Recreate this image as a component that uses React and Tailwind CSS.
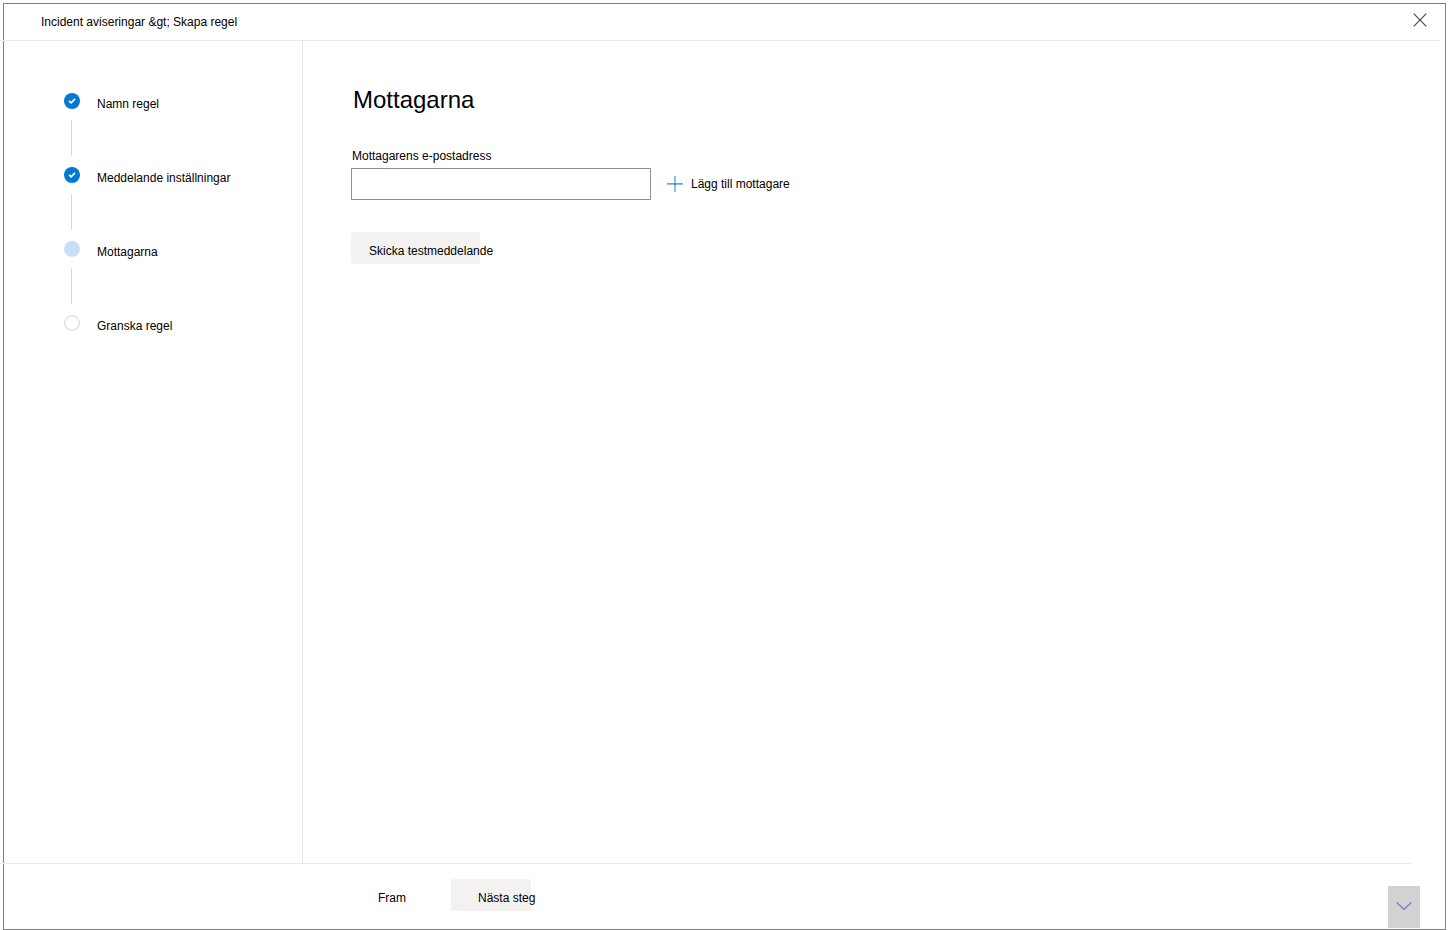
const steps = [
  { label: "Namn regel", state: "done" },
  { label: "Meddelande inställningar", state: "done" },
  { label: "Mottagarna", state: "current" },
  { label: "Granska regel", state: "upcoming" },
];

function StepMarker({ state }) {
  return (
    <svg className="block size-4" viewBox="0 0 16 16" fill="none" aria-hidden="true">
      {state === "done" && (
        <>
          <circle cx="8" cy="8" r="8" fill="#0078d4" />
          <path d="M5 7.8 7.1 9.8 11 5.9" stroke="#fff" strokeWidth="1.7" />
        </>
      )}
      {state === "current" && <circle cx="8" cy="8" r="8" fill="#c7e0f4" />}
      {state === "upcoming" && <circle cx="8" cy="8" r="7.3" stroke="#e1e1e1" strokeWidth="1.5" />}
    </svg>
  );
}

function Step({ label, state, last }) {
  return (
    <li className="flex gap-[17px]" aria-current={state === "current" ? "step" : undefined}>
      <div className="flex w-4 flex-col items-center">
        <StepMarker state={state} />
        {!last && <div className="mt-[11px] mb-[11px] mr-px h-9 w-px bg-[#d8d8d8]" />}
      </div>
      <span className="pt-[3px] leading-4">{label}</span>
    </li>
  );
}

export default function App() {
  return (
    <div className="flex min-h-screen bg-white pt-[3px] pr-[6px] pl-[3px] font-['Liberation_Sans',Arial,sans-serif] text-xs text-black">
      <div className="flex flex-1 flex-col border border-[#7f7f7f]">
        <header className="mr-[5px] -ml-1 flex h-[37px] items-center justify-between border-b border-[#eaeaea] pr-[13px] pl-[41px]">
          <span>Incident aviseringar &amp;gt; Skapa regel</span>
          <button type="button" aria-label="Stäng" className="mb-1">
            <svg className="block size-[14px]" viewBox="0 0 14 14" stroke="#444" strokeWidth="1.1" aria-hidden="true">
              <path d="M.7.7 13.3 13.3M13.3.7.7 13.3" />
            </svg>
          </button>
        </header>

        <div className="flex flex-1">
          <nav className="w-[299px] shrink-0 border-r border-[#eaeaea] pt-[52px] pl-[60px]" aria-label="Steg">
            <ol className="flex flex-col">
              {steps.map((step, i) => (
                <Step key={step.label} {...step} last={i === steps.length - 1} />
              ))}
            </ol>
          </nav>

          <main className="flex-1 pt-[43px] pl-12">
            <h1 className="pl-[2px] text-2xl leading-8">Mottagarna</h1>
            <form>
              <label htmlFor="recipient" className="mt-8 block pl-px leading-4">
                Mottagarens e-postadress
              </label>
              <div className="mt-1 flex items-center gap-4">
                <input id="recipient" type="email" className="h-8 w-[300px] border border-[#8f8f8f] bg-white px-2 outline-none" />
                <button type="button" className="flex items-center gap-2">
                  <svg className="size-4" viewBox="0 0 16 16" aria-hidden="true">
                    <path d="M7 0h2v16H7z" fill="#8dbfe3" />
                    <path d="M0 7h16v2H0z" fill="#8dbfe3" />
                    <path d="M0 7h16v1H0z" fill="#65a9da" />
                    <path d="M7 7h2v2H7z" fill="#348fd1" />
                  </svg>
                  Lägg till mottagare
                </button>
              </div>
              <button type="button" className="mt-8 block h-8 w-[129px] rounded-xs bg-[#f3f2f1] pt-1.5 pl-[18px] text-left whitespace-nowrap">
                Skicka testmeddelande
              </button>
            </form>
          </main>
        </div>

        <footer className="-ml-1 flex h-[66px] items-start justify-between">
          <div className="mr-[34px] flex flex-1 items-start gap-[45px] border-t border-[#eaeaea] pt-[15px] pl-[378px]">
            <button type="button" className="h-8 pt-1.5">Fram</button>
            <button type="button" className="h-8 w-20 rounded-xs bg-[#f3f2f1] pt-1.5 pl-[27px] text-left whitespace-nowrap">
              Nästa steg
            </button>
          </div>
          <button
            type="button"
            aria-label="Rulla nedåt"
            className="mt-[23px] mr-[25px] -ml-[57px] flex h-[42px] w-8 items-center justify-center bg-[#d2d2d2]"
          >
            <svg className="mb-[2px] h-2 w-4" viewBox="0 0 16 8" fill="none" aria-hidden="true">
              <path d="M.5.3 8 7.5 15.5.3" stroke="#b18bc4" strokeWidth="1.5" />
              <path d="M.5.3 8 7.3 15.5.3" stroke="#3f82d2" strokeWidth=".8" />
            </svg>
          </button>
        </footer>
      </div>
    </div>
  );
}
